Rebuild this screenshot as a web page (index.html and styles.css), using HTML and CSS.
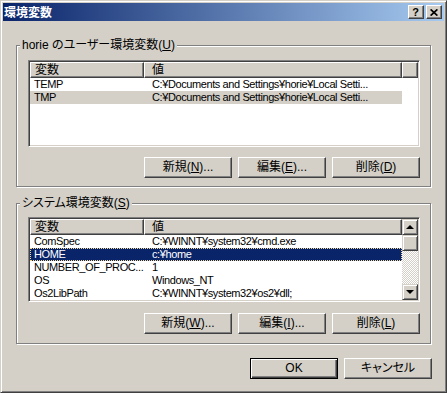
FILE: index.html
```html
<!DOCTYPE html>
<html lang="ja">
<head>
    <meta charset="UTF-8">
    <title>環境変数</title>
    <link rel="stylesheet" href="styles.css">
</head>
<body>
    <div class="window">
        <div class="titlebar">
            <span class="title">環境変数</span>
            <div class="caption-buttons">
                <span class="cap-btn help">?</span>
                <span class="cap-btn close">
                    <svg width="8" height="7" viewBox="0 0 8 7"><path d="M0.6 0.4 L7.4 6.6 M7.4 0.4 L0.6 6.6" stroke="#000" stroke-width="1.7" fill="none"/></svg>
                </span>
            </div>
        </div>

        <div class="client">
            <fieldset class="group">
                <legend>horie のユーザー環境変数(<u>U</u>)</legend>
                <div class="listview user-list">
                    <div class="lv-main">
                        <div class="lv-header">
                            <div class="hd col-name">変数</div>
                            <div class="hd col-value">値</div>
                        </div>
                        <div class="row"><span class="col-name">TEMP</span><span class="col-value">C:¥Documents and Settings¥horie¥Local Setti...</span></div>
                        <div class="row inactive"><span class="col-name">TMP</span><span class="col-value">C:¥Documents and Settings¥horie¥Local Setti...</span></div>
                    </div>
                    <div class="lv-side">
                        <div class="hd filler"></div>
                    </div>
                </div>
                <div class="buttons">
                    <button>新規(<u>N</u>)...</button>
                    <button>編集(<u>E</u>)...</button>
                    <button>削除(<u>D</u>)</button>
                </div>
            </fieldset>

            <fieldset class="group system">
                <legend>システム環境変数(<u>S</u>)</legend>
                <div class="listview sys-list">
                    <div class="lv-main">
                        <div class="lv-header">
                            <div class="hd col-name">変数</div>
                            <div class="hd col-value">値</div>
                        </div>
                        <div class="row"><span class="col-name">ComSpec</span><span class="col-value">C:¥WINNT¥system32¥cmd.exe</span></div>
                        <div class="row selected"><span class="col-name">HOME</span><span class="col-value">c:¥home</span></div>
                        <div class="row"><span class="col-name">NUMBER_OF_PROC...</span><span class="col-value">1</span></div>
                        <div class="row"><span class="col-name">OS</span><span class="col-value">Windows_NT</span></div>
                        <div class="row"><span class="col-name">Os2LibPath</span><span class="col-value">C:¥WINNT¥system32¥os2¥dll;</span></div>
                    </div>
                    <div class="scrollbar">
                        <div class="sb-btn"><span class="arrow-up"></span></div>
                        <div class="sb-thumb"></div>
                        <div class="sb-track"></div>
                        <div class="sb-btn"><span class="arrow-down"></span></div>
                    </div>
                </div>
                <div class="buttons">
                    <button>新規(<u>W</u>)...</button>
                    <button>編集(<u>I</u>)...</button>
                    <button>削除(<u>L</u>)</button>
                </div>
            </fieldset>

            <div class="dialog-buttons">
                <button class="default">OK</button>
                <button>キャンセル</button>
            </div>
        </div>
    </div>
</body>
</html>
```

FILE: styles.css
```css
body {
    margin: 0;
    font-family: "Liberation Sans", "Noto Sans CJK JP", sans-serif;
    font-size: 12px;
    font-feature-settings: "palt";
    color: #000;
}
.window {
    width: 447px;
    height: 393px;
    box-sizing: border-box;
    background-color: #d4d0c8;
    border: 1px solid;
    border-color: #d4d0c8 #404040 #404040 #d4d0c8;
    box-shadow: inset 1px 1px #fff, inset -1px -1px #808080;
    padding: 2px;
    display: flex;
    flex-direction: column;
}
.titlebar {
    height: 18px;
    flex: none;
    display: flex;
    align-items: center;
    justify-content: space-between;
    padding: 0 2px 0 1px;
    background: linear-gradient(90deg, #0a246a, #a6caf0);
}
.title {
    color: #fff;
    font-weight: bold;
    font-family: "Noto Sans CJK JP", sans-serif;
    font-size: 12px;
    line-height: 14px;
}
.caption-buttons {
    display: flex;
    gap: 2px;
}
.cap-btn {
    width: 16px;
    height: 14px;
    box-sizing: border-box;
    background-color: #d4d0c8;
    border: 1px solid;
    border-color: #fff #404040 #404040 #fff;
    box-shadow: inset -1px -1px #808080;
    display: flex;
    align-items: center;
    justify-content: center;
}
.help {
    font-family: "Liberation Sans", sans-serif;
    font-weight: bold;
    font-size: 11px;
    line-height: 11px;
    padding-right: 1px;
}
.close svg {
    display: block;
    margin-right: 1px;
}
.client {
    flex: 1;
    padding: 17px 12px 0 13px;
}
.group {
    margin: 0;
    width: 415px;
    box-sizing: border-box;
    border: 1px solid #808080;
    box-shadow: inset 1px 1px #fff, 1px 1px #fff;
    padding: 7px 10px 8px 11px;
}
.group.system {
    margin-top: 9px;
    padding: 6px 10px 9px 11px;
}
.group legend {
    margin-left: -8px;
    padding: 0 2px;
    line-height: 15px;
    background-color: #d4d0c8;
}
.listview {
    display: flex;
    background-color: #fff;
    border: 1px solid;
    border-color: #808080 #fff #fff #808080;
    box-shadow: inset 1px 1px #404040, inset -1px -1px #d4d0c8;
    padding: 1px;
}
.user-list {
    height: 87px;
    box-sizing: border-box;
}
.sys-list {
    height: 85px;
    box-sizing: border-box;
}
.lv-main {
    width: 372px;
}
.lv-side {
    width: 16px;
}
.lv-header {
    display: flex;
}
.hd {
    height: 16px;
    box-sizing: border-box;
    background-color: #d4d0c8;
    border: 1px solid;
    border-color: #fff #404040 #404040 #fff;
    box-shadow: inset -1px -1px #808080;
    line-height: 14px;
    padding-left: 4px;
}
.hd.col-name {
    width: 114px;
}
.hd.col-value {
    flex: 1;
    padding-left: 7px;
}
.filler {
    padding: 0;
}
.row {
    display: flex;
    height: 13px;
    line-height: 13px;
    font-size: 11px;
    letter-spacing: -0.4px;
    white-space: nowrap;
}
.row .col-name {
    width: 114px;
    padding-left: 4px;
    box-sizing: border-box;
    overflow: hidden;
}
.row .col-value {
    flex: 1;
    padding-left: 8px;
    overflow: hidden;
}
.row.inactive {
    background-color: #d4d0c8;
}
.row.selected {
    background-color: #0a246a;
    color: #fff;
    outline: 1px dotted #f5db95;
    outline-offset: -1px;
}
.scrollbar {
    width: 16px;
    display: flex;
    flex-direction: column;
}
.sb-btn,
.sb-thumb {
    height: 16px;
    flex: none;
    box-sizing: border-box;
    background-color: #d4d0c8;
    border: 1px solid;
    border-color: #d4d0c8 #404040 #404040 #d4d0c8;
    box-shadow: inset 1px 1px #fff, inset -1px -1px #808080;
    display: flex;
    align-items: center;
    justify-content: center;
}
.sb-track {
    flex: 1;
    background: repeating-conic-gradient(#fff 0 25%, #d4d0c8 0 50%) 0 0 / 2px 2px;
}
.arrow-up,
.arrow-down {
    width: 0;
    height: 0;
    border-left: 4px solid transparent;
    border-right: 4px solid transparent;
}
.arrow-up {
    border-bottom: 4px solid #000;
    margin-bottom: 1px;
}
.arrow-down {
    border-top: 4px solid #000;
}
.buttons {
    display: flex;
    justify-content: flex-end;
    gap: 6px;
    margin-top: 10px;
}
.system .buttons {
    margin-top: 11px;
}
button {
    width: 88px;
    height: 21px;
    box-sizing: border-box;
    background-color: #d4d0c8;
    border: 1px solid;
    border-color: #fff #404040 #404040 #fff;
    box-shadow: inset -1px -1px #808080;
    font: inherit;
    line-height: 17px;
    padding: 0;
    color: #000;
}
.dialog-buttons {
    display: flex;
    justify-content: flex-end;
    gap: 6px;
    margin-top: 14px;
}
button.default {
    border: 1px solid #000;
    box-shadow: inset 1px 1px #fff, inset -1px -1px #404040, inset -2px -2px #808080;
}
```
